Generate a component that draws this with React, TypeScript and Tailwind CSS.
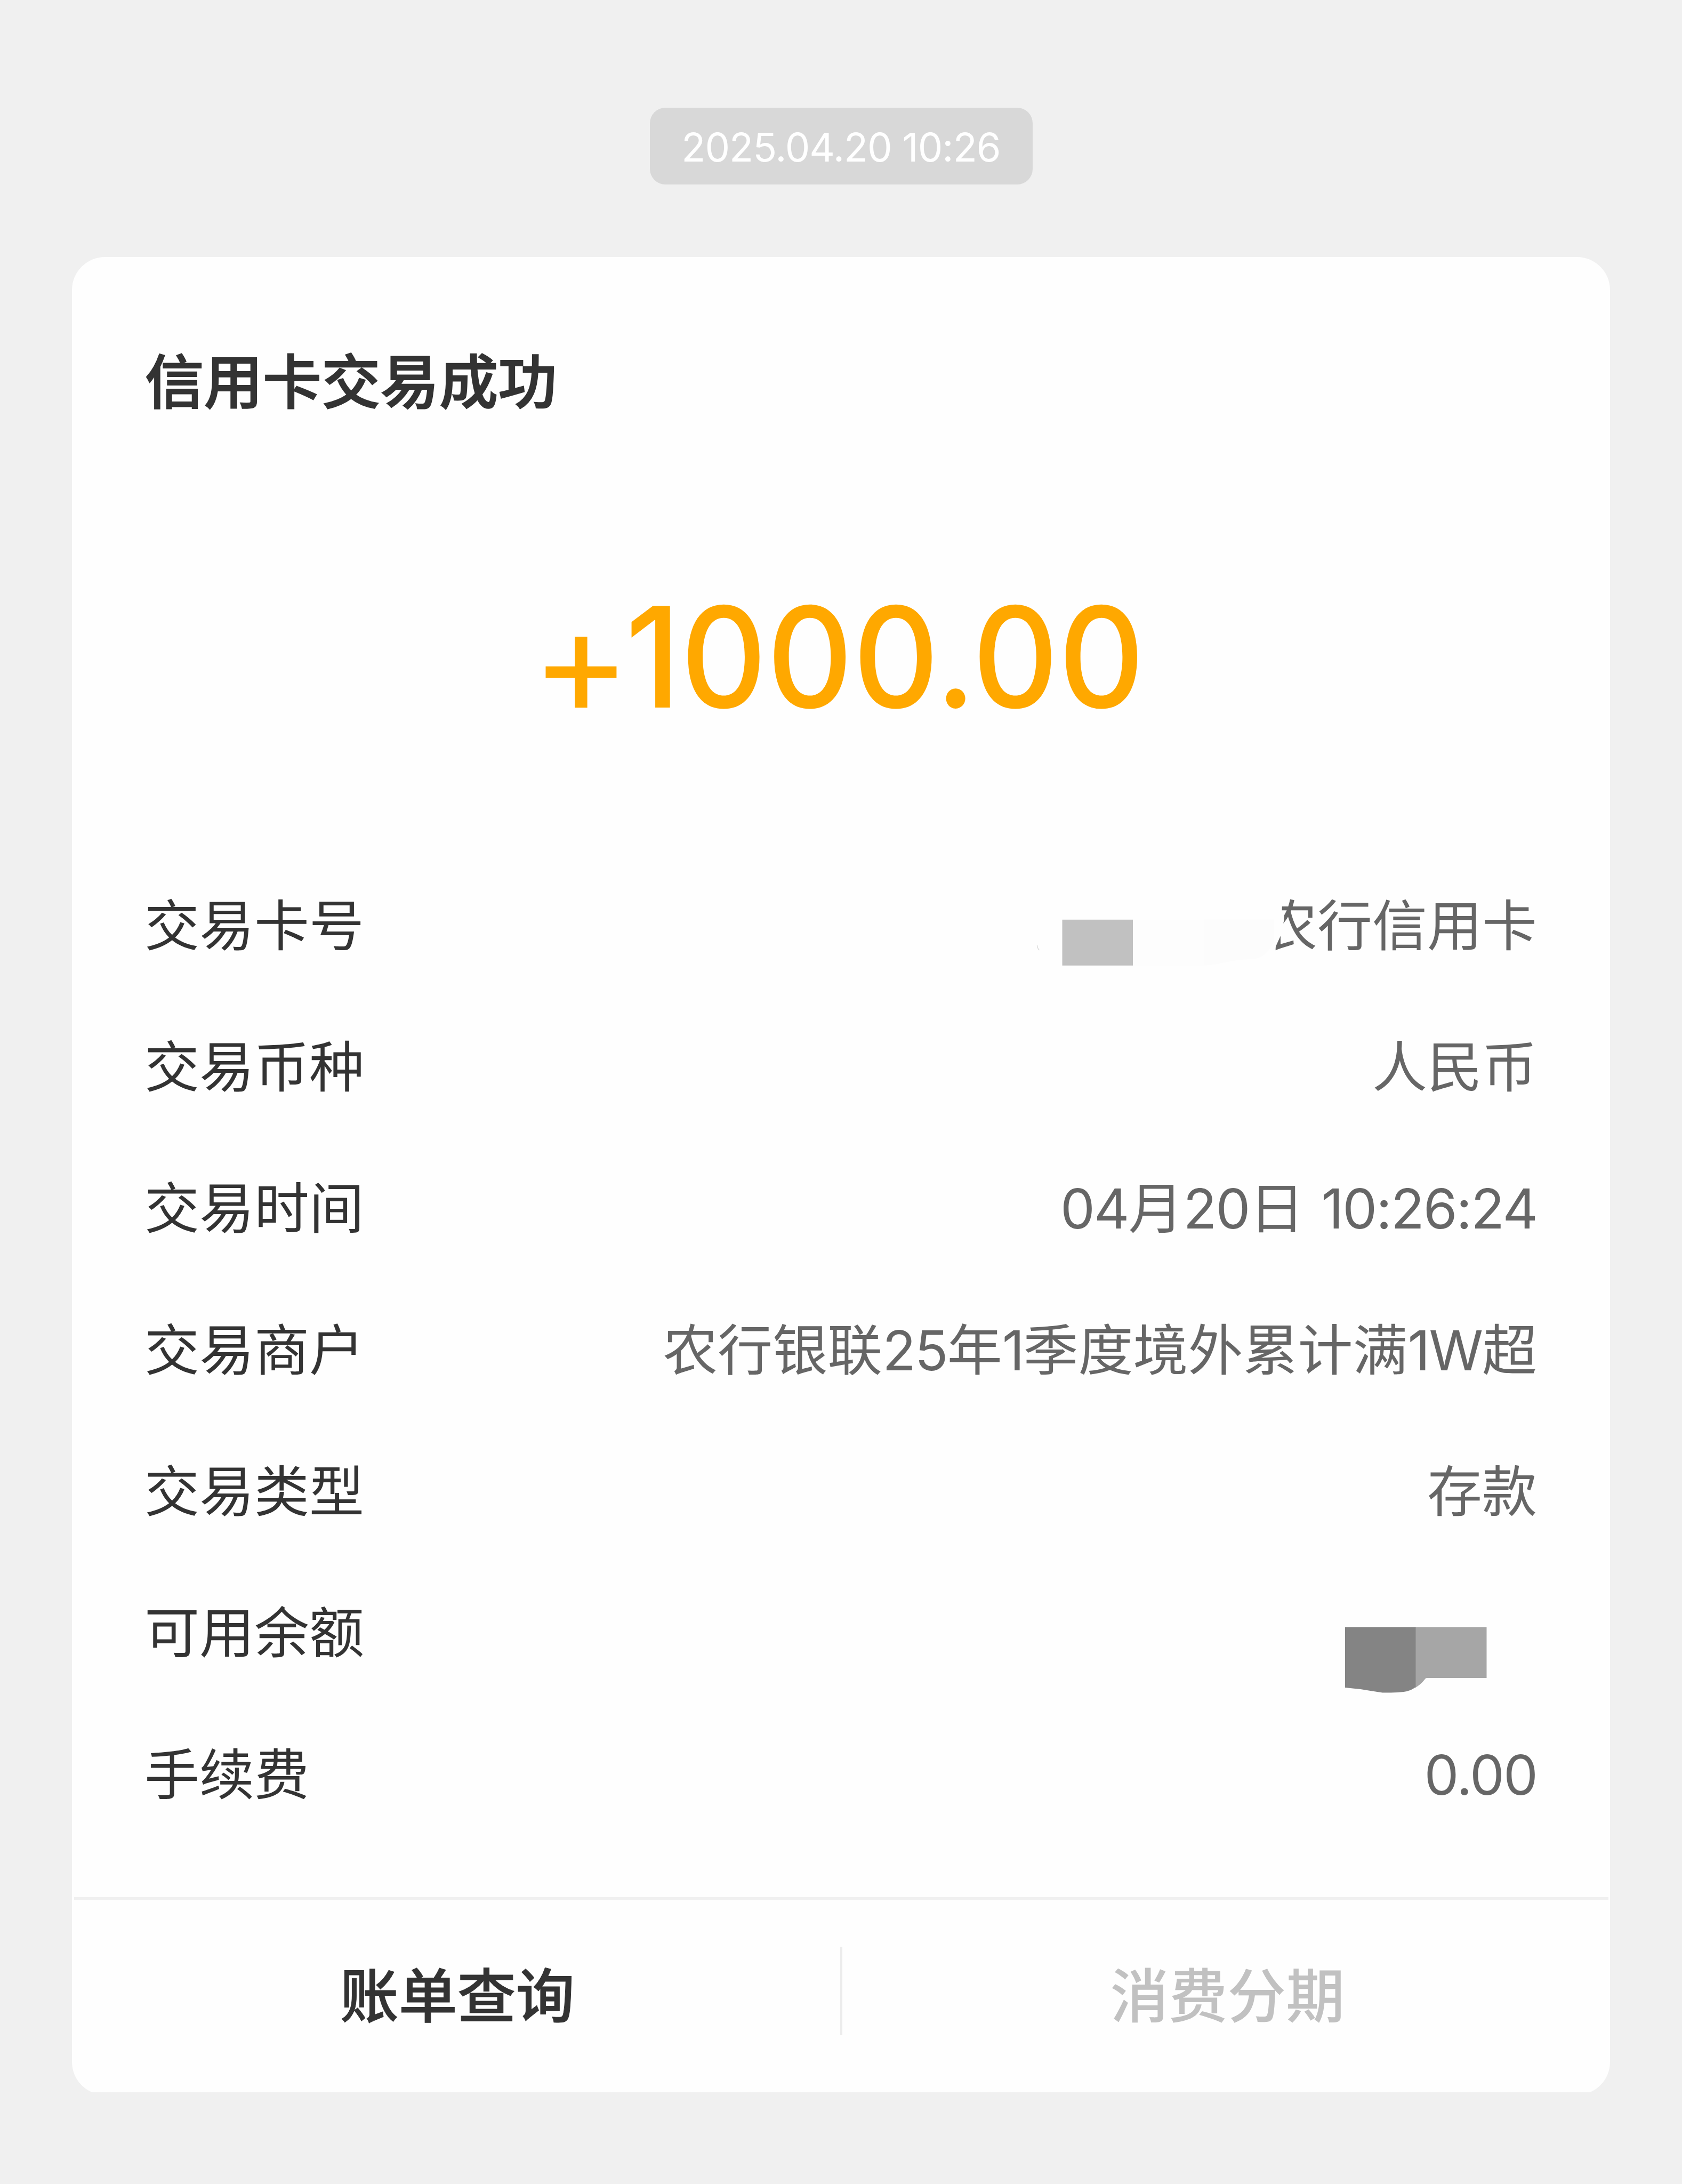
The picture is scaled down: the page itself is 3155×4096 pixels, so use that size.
import type { ReactNode } from "react";

/** Digits and Latin letters set a little tighter than the surrounding Chinese text. */
function Latin({ children }: { children: ReactNode }) {
  return <span className="tracking-[-2px] [word-spacing:5px]">{children}</span>;
}

/** Mosaic covering the card number in front of the card name. */
function CardNumberMask() {
  return (
    <svg
      className="absolute top-0 right-[461px] h-[265px] w-[485px]"
      viewBox="1935 1604 485 265"
      aria-hidden="true"
    >
      <path
        d="M2340 1670H2404L2402.5 1708L2407 1716L2406 1728L2401 1753L2391 1775L2390 1790H2340Z"
        fill="#fefefe"
      />
      <rect x="1990.5" y="1724.8" width="132.5" height="86" fill="#c1c1c1" />
      <rect x="2123" y="1724.8" width="132.5" height="86" fill="#fdfdfd" />
      <path
        d="M2255.5 1724.8H2387.3V1767C2378 1785 2366 1798 2345.7 1799C2320 1799 2305 1804 2280 1808C2272 1809.5 2264 1810 2255.5 1810.8Z"
        fill="#fcfcfc"
      />
      <path d="M1943.5 1773Q1944 1779 1947.5 1782" fill="none" stroke="#dcdcdc" strokeWidth="1.5" />
    </svg>
  );
}

/** Mosaic covering the available balance. */
function BalanceMask() {
  return (
    <svg
      className="absolute top-0 right-[81px] h-[265px] w-[300px]"
      viewBox="2500 2930.35 300 265"
      aria-hidden="true"
    >
      <path
        d="M2652 3051.8H2786.5V3147.4H2674Q2671.5 3148 2670 3150.5Q2663 3159.5 2652 3166Z"
        fill="#a6a6a6"
      />
      <path
        d="M2521 3051.8H2653.5V3164.3C2643 3171.5 2636 3173 2628 3173.6C2614 3175 2602 3175 2591 3174.8L2570 3171.5L2550 3168.3L2521 3165.3Z"
        fill="#848484"
      />
    </svg>
  );
}

type Detail = { label: string; value?: ReactNode; mask?: ReactNode };

const details: Detail[] = [
  { label: "交易卡号", value: "农行信用卡", mask: <CardNumberMask /> },
  { label: "交易币种", value: "人民币" },
  {
    label: "交易时间",
    value: (
      <>
        <Latin>04</Latin>月<Latin>20</Latin>日<Latin> 10:26:24</Latin>
      </>
    ),
  },
  {
    label: "交易商户",
    value: (
      <>
        农行银联<Latin>25</Latin>年<Latin>1</Latin>季度境外累计满<Latin>1W</Latin>超
      </>
    ),
  },
  { label: "交易类型", value: "存款" },
  { label: "可用余额", mask: <BalanceMask /> },
  { label: "手续费", value: <Latin>0.00</Latin> },
];

export default function App() {
  return (
    <div className="flex h-[4096px] w-[3155px] flex-col items-center overflow-hidden bg-[#f0f0f0] font-['Inter','Noto_Sans_CJK_SC',sans-serif] whitespace-nowrap">
      <div className="mt-[201.5px] h-[144.7px] w-[718px] shrink-0 rounded-[29px] bg-[#d8d8d8] pt-[2px] text-center text-[74px] leading-[144px] tracking-[-1px] text-white">
        2025.04.20 10:26
      </div>

      <main className="mt-[135.7px] h-[3441.8px] w-[2885px] shrink-0 overflow-hidden rounded-t-[62px]">
        <div className="h-[3447px] rounded-b-[62px] bg-[#fefefe] pt-[170.6px]">
          <h1 className="pl-[137px] text-[110.4px] leading-[130px] font-medium text-[#333333] [-webkit-text-stroke:2px_#333333]">
            信用卡交易成功
          </h1>

          <div className="mt-[299.4px] flex h-[300px] pl-[861.7px] leading-[300px] text-[#ffa800]">
            <span className="relative top-[7px] mr-[-10px] text-[282px] font-normal">+</span>
            <span className="origin-left scale-x-[0.955] text-[262px] font-medium">1000.00</span>
          </div>

          <dl className="mt-[222px] pr-[137px] pl-[136px] text-[103px]">
            {details.map(({ label, value, mask }) => (
              <div
                key={label}
                className="relative flex h-[265.3px] justify-between leading-[265.3px]"
              >
                <dt className="text-[#333333]">{label}</dt>
                <dd className="relative text-[#666666]">
                  {value}
                  {mask}
                </dd>
              </div>
            ))}
          </dl>

          <div className="mx-[3.5px] mt-[97px] h-[5px] bg-[#f0f0f0]" />

          <div className="flex h-[361px] items-center text-[110px] leading-[130px] font-medium">
            <div className="flex-1 pt-[2px] pl-[5px] text-center text-[#333333] [-webkit-text-stroke:1px_#333333]">
              账单查询
            </div>
            <div className="mb-[18px] h-[166px] w-[4px] bg-[#ececec]" />
            <div className="flex-1 pt-[2px] pl-[5px] text-center text-[#c1c1c1]">消费分期</div>
          </div>
        </div>
      </main>
    </div>
  );
}
